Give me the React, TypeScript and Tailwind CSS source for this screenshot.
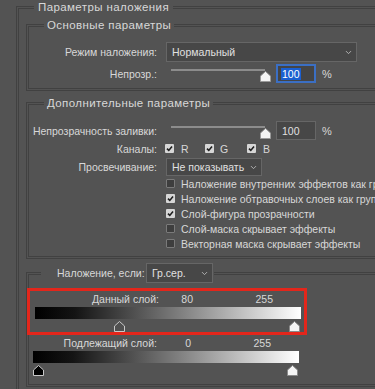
import { ChevronDown } from 'lucide-react'

function Thumb({ fill, stroke }: { fill: string; stroke: string }) {
  return (
    <svg width="11" height="11" viewBox="0 0 11 11">
      <path d="M5.5 0.5 L10.5 5 L10.5 10.5 L0.5 10.5 L0.5 5 Z" fill={fill} stroke={stroke} strokeWidth="1" />
    </svg>
  )
}

function Select({ value, className }: { value: string; className: string }) {
  return (
    <div className={'flex items-center justify-between border border-[#666] bg-[#474747] pl-[5px] pr-[3px] text-[#e0e0e0] ' + className}>
      <span>{value}</span>
      <ChevronDown size={9} strokeWidth={2.5} className="text-[#b5b5b5]" />
    </div>
  )
}

function Box({ checked }: { checked: boolean }) {
  return checked ? (
    <span className="flex h-[9px] w-[9px] items-center justify-center rounded-[1px] bg-[#d6d6d6]">
      <svg width="7" height="7" viewBox="0 0 7 7">
        <path d="M1 3.6 L2.8 5.4 L6 1.6" fill="none" stroke="#1e1e1e" strokeWidth="1.6" />
      </svg>
    </span>
  ) : (
    <span className="h-[9px] w-[9px] rounded-[1px] border border-[#7a7a7a] bg-[#3e3e3e]" />
  )
}

function OpacityRow({ label, focused }: { label: string; focused?: boolean }) {
  return (
    <div className="flex h-[19px] items-center">
      <span className="w-[128px] whitespace-nowrap text-right">{label}</span>
      <div className="relative ml-[14px] h-[19px] w-[100px]">
        <div className="absolute left-0 top-[5px] h-[2px] w-[94px] bg-[#8c8c8c]" />
        <div className="absolute left-[89px] top-[7px]">
          <Thumb fill="#f4f4f4" stroke="#9a9a9a" />
        </div>
      </div>
      {focused ? (
        <div className="ml-[5px] flex h-[19px] w-[40px] items-center border-2 border-[#3b6fc4] bg-[#454545] pl-[3px]">
          <span className="bg-[#1b5fd0] px-[1px] leading-[12px] text-white">100</span>
        </div>
      ) : (
        <div className="ml-[5px] flex h-[19px] w-[40px] items-center border border-[#666] bg-[#474747] pl-[5px] text-[#e0e0e0]">100</div>
      )}
      <span className="ml-[6px] text-[11px]">%</span>
    </div>
  )
}

const pos = (v: number) => 5 + (v / 255) * 254 - 5.5

function BlendBar({ label, low, high, lowFill }: { label: string; low: number; high: number; lowFill: string }) {
  return (
    <div>
      <div className="flex h-[15px] items-center">
        <span className="w-[129px] text-right">{label}</span>
        <span className="w-[34px] text-right">{low}</span>
        <span className="w-[80px] text-right">{high}</span>
      </div>
      <div className="ml-[5px] mt-[1px] h-[12px] w-[266px] bg-[linear-gradient(to_right,#000_0%,#141414_15%,#808080_55%,#fff_100%)]" />
      <div className="relative ml-[5px] mt-[2px] h-[11px] w-[266px]">
        <div className="absolute top-0" style={{ left: pos(low) }}>
          <Thumb fill={lowFill} stroke="#c8c8c8" />
        </div>
        <div className="absolute top-0" style={{ left: pos(high) }}>
          <Thumb fill="#f4f4f4" stroke="#8a8a8a" />
        </div>
      </div>
    </div>
  )
}

const checks: [string, boolean][] = [
  ['Наложение внутренних эффектов как группу', false],
  ['Наложение обтравочных слоев как группу', true],
  ['Слой-фигура прозрачности', true],
  ['Слой-маска скрывает эффекты', false],
  ['Векторная маска скрывает эффекты', false],
]

export default function App() {
  const sets = 'border-[3px] border-double border-[#414141]'
  const legend = 'text-[11.5px] tracking-[0.4px]'
  return (
    <div className="h-[389px] w-[375px] overflow-hidden bg-[#535353] font-['Liberation_Sans',Arial,sans-serif] text-[10.5px] leading-[14px] text-[#d8d8d8]">
      <fieldset className={'ml-[16px] w-[420px] pb-[12px] ' + sets}>
        <legend className={'ml-[15px] px-[4px] ' + legend}>Параметры наложения</legend>

        <fieldset className={'ml-[7px] mt-[4px] ' + sets}>
          <legend className={'ml-[15px] px-[3px] ' + legend}>Основные параметры</legend>
          <div className="pb-[5px] pt-[10px]">
            <div className="flex h-[20px] items-center">
              <span className="w-[128px] text-right">Режим наложения:</span>
              <Select value="Нормальный" className="ml-[9px] h-[20px] w-[191px]" />
            </div>
            <div className="mt-[2px]">
              <OpacityRow label="Непрозр.:" focused />
            </div>
          </div>
        </fieldset>

        <fieldset className={'ml-[7px] mt-[5px] ' + sets}>
          <legend className={'ml-[15px] px-[3px] ' + legend}>Дополнительные параметры</legend>
          <div className="pb-[5px] pt-[11px]">
            <OpacityRow label="Непрозрачность заливки:" />
            <div className="flex h-[17px] items-center">
              <span className="w-[128px] text-right">Каналы:</span>
              <span className="ml-[8px]"><Box checked /></span>
              <span className="ml-[7px] w-[24px]">R</span>
              <Box checked />
              <span className="ml-[6px] w-[27px]">G</span>
              <Box checked />
              <span className="ml-[7px]">B</span>
            </div>
            <div className="mt-[1px] flex h-[18px] items-center">
              <span className="w-[128px] text-right">Просвечивание:</span>
              <Select value="Не показывать" className="ml-[9px] h-[18px] w-[96px]" />
            </div>
            {checks.map(([t, c]) => (
              <div key={t} className="ml-[137px] flex h-[15px] items-center whitespace-nowrap">
                <Box checked={c} />
                <span className="ml-[6px]">{t}</span>
              </div>
            ))}
          </div>
        </fieldset>

        <fieldset className={'ml-[7px] mt-[4px] pb-[8px] ' + sets}>
          <legend className="ml-[12px] flex items-center pl-[16px] pr-[1px]">
            <span className="w-[82px] whitespace-nowrap">Наложение, если:</span>
            <Select value="Гр.сер." className="ml-[7px] h-[20px] w-[67px]" />
          </legend>
          <div className="-ml-[2px] mt-[5px] w-[280px] border-[3px] border-[#e3261b]">
            <BlendBar label="Данный слой:" low={80} high={255} lowFill="#505050" />
          </div>
          <div className="-ml-[1px]">
            <BlendBar label="Подлежащий слой:" low={0} high={255} lowFill="#000" />
          </div>
        </fieldset>
      </fieldset>
    </div>
  )
}
